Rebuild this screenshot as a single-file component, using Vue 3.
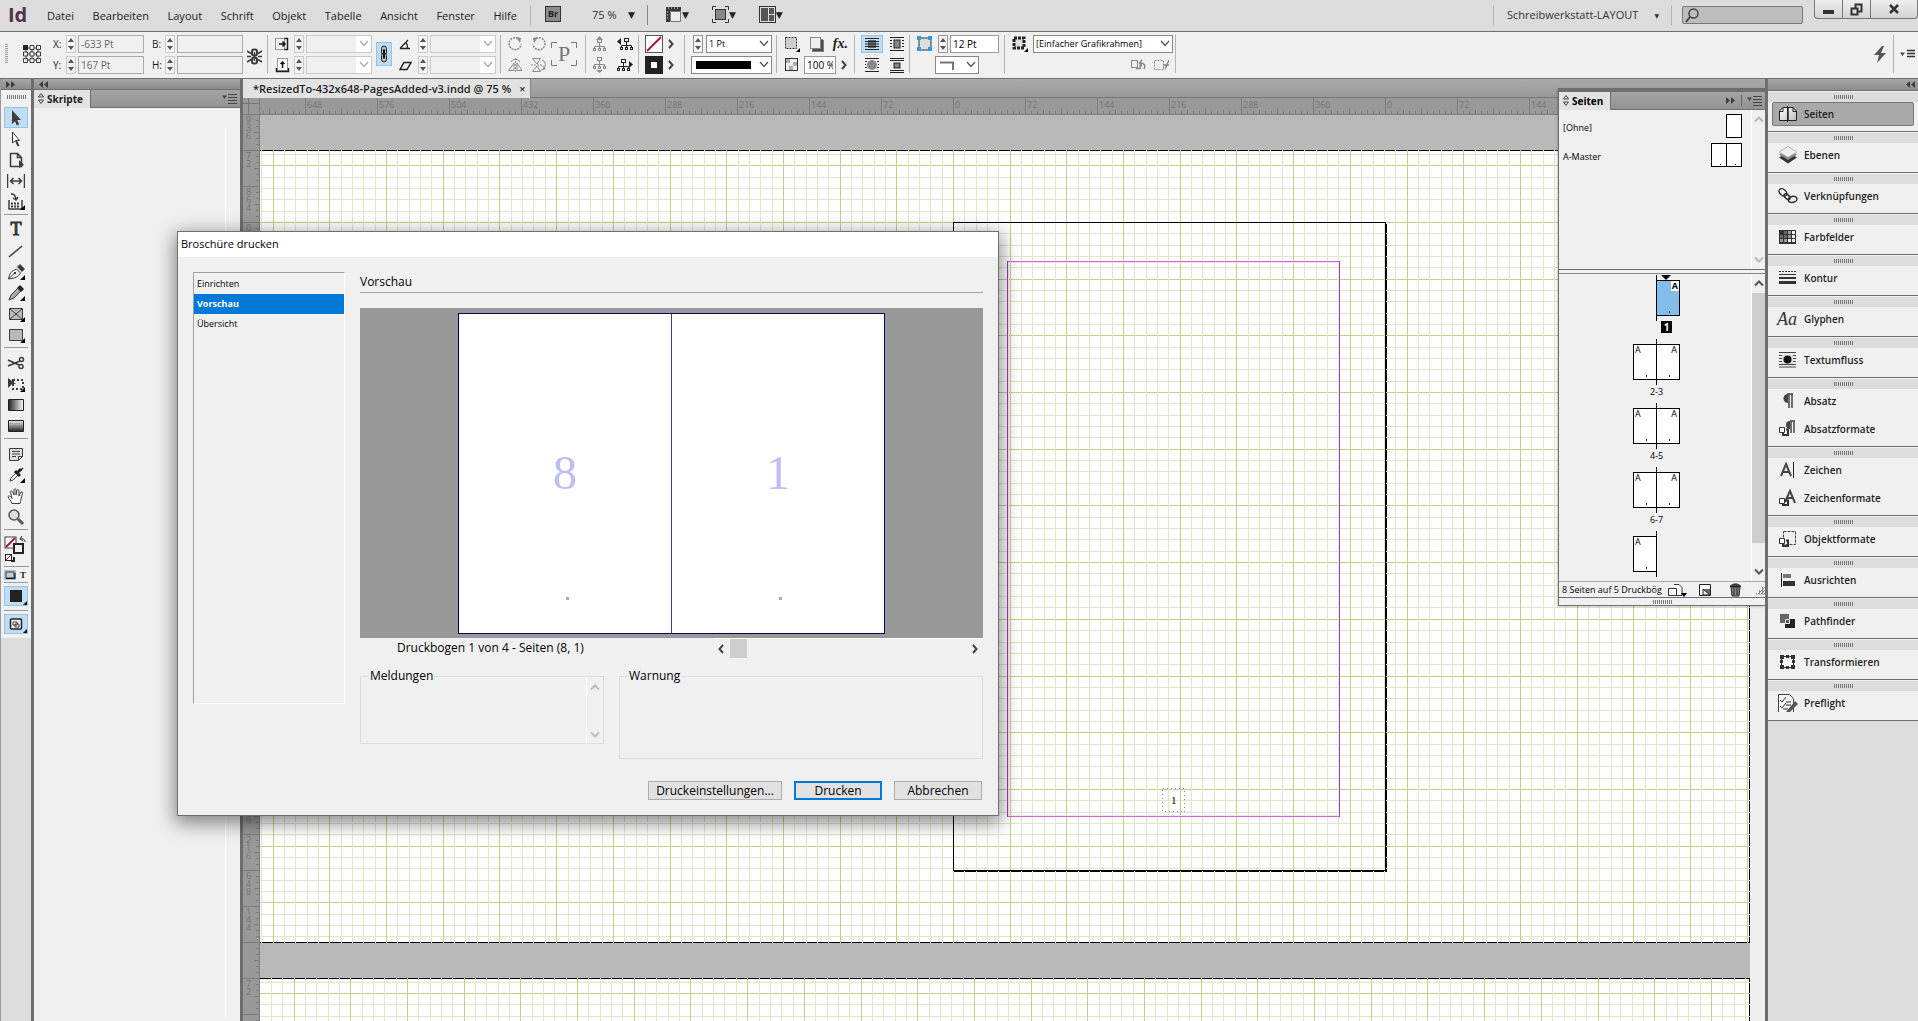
<script setup>
import { h } from 'vue'

const tree = `<g stroke="currentColor" fill="#f0f0f0"><path d="M7.5 6v3M2.5 12V9.5h10V12M7.5 9v3" fill="none"/><rect x="5.5" y="2.5" width="4" height="3"/><rect x="1.5" y="11.5" width="2" height="2"/><rect x="6.5" y="11.5" width="2" height="2"/><rect x="11.5" y="11.5" width="2" height="2"/></g>`
const lines = '<path d="M1 2.5h14M1 13.5h14M1 5.5h14M1 10.5h14M1 8h14" stroke="#222"/>'
const corner = '<path d="M18 17v-5l-5 5z" fill="#000"/>'
const icons = {
  ref: '<path d="M4 4h12v12H4zM4 10h12M10 4v12" fill="none" stroke="#3c3c3c"/><g fill="#f0f0f0" stroke="#3c3c3c"><path d="M8 1.5h4v4H8zM14.5 1.5h4v4h-4zM1.5 8h4v4h-4zM8 8h4v4H8zM14.5 8h4v4h-4zM1.5 14.5h4v4h-4zM8 14.5h4v4H8zM14.5 14.5h4v4h-4z"/></g><path d="M1 1h5v5H1z" fill="#222"/>',
  broken: '<g fill="none" stroke="#3c3c3c"><rect x="5" y="1.5" width="5" height="6" rx="2" stroke-width="2"/><rect x="5" y="9.5" width="5" height="6" rx="2" stroke-width="2"/><path d="M0 3l4 2.500M0 8.500h4M0 14l4-2.500M15 3l-4 2.500M15 8.500h-4M15 14l-4-2.500M7.500 4v9" stroke-width="1.500"/></g>',
  chain: '<g fill="#bbb" stroke="#222"><rect x="3.500" y="1" width="5" height="9" rx="2.500"/><rect x="3.500" y="8" width="5" height="9" rx="2.500"/></g><path d="M6 4.500v9" stroke="#111" stroke-width="2"/>',
  scaleX: '<rect x="1.500" y="2.500" width="9" height="11" fill="none" stroke="#3c3c3c" stroke-dasharray="1 1"/><path d="M10.500 2.500h3v11h-3" fill="none" stroke="#222" stroke-width="1.500"/><path d="M5 8h6M8.500 5.500L11 8l-2.500 2.500" stroke="#111" stroke-width="1.500" fill="none"/>',
  scaleY: '<rect x="3.500" y="1.500" width="10" height="12" fill="#fff" stroke="#3c3c3c" stroke-dasharray="1 1"/><path d="M2.500 11v3.500h12V11" stroke="#222" fill="none" stroke-width="1.500"/><path d="M8.500 11V5M6.500 7l2-2 2 2" stroke="#111" stroke-width="1.500" fill="none"/>',
  angle: '<path d="M2 12.500h10M2 12.500L10 4M8 7c1.500 1 1.500 3 1.500 5" stroke="#222" fill="none" stroke-width="1.300"/>',
  shear: '<path d="M2 12.500h7L13 5.500H6z" stroke="#222" fill="none" stroke-width="1.500"/>',
  cw: '<path d="M11 2.500A6 6 0 1 0 14 8" fill="none" stroke="#8a8a8a" stroke-width="1.500" stroke-dasharray="2 1"/><path d="M9 1l5 1-1 5z" fill="#8a8a8a"/>',
  ccw: '<path d="M5 2.500A6 6 0 1 1 2 8" fill="none" stroke="#8a8a8a" stroke-width="1.500" stroke-dasharray="2 1"/><path d="M7 1L2 2l1 5z" fill="#8a8a8a"/>',
  flipH: '<path d="M1.500 13.500L7 6v7.500zM10 6l5 7.500h-5z" fill="none" stroke="#8a8a8a"/><path d="M8.500 1v14" stroke="#8a8a8a" stroke-dasharray="2 1"/><path d="M4 5a5 5 0 0 1 9 0" stroke="#8a8a8a" fill="none"/>',
  flipV: '<path d="M1.500 1.500h8L6 7zM1.500 14.500h8L6 9z" fill="none" stroke="#8a8a8a"/><path d="M0 8h12" stroke="#8a8a8a" stroke-dasharray="2 1"/><path d="M11 3a5 5 0 0 1 1 9M10 13l4-1-2-3" stroke="#8a8a8a" fill="none"/>',
  pbox: '<path d="M1.500 7V1.500H7M21 1.500h5.500V7M26.500 19v5.500H21M7 24.500H1.500V19" fill="none" stroke="#777"/>',
  treeUp: `<g color="#8a8a8a" transform="translate(0 1)">${tree}</g><path d="M4 4h7L7.500 0z" fill="#8a8a8a"/>`,
  treeDown: `<g color="#8a8a8a" transform="translate(0 -2)">${tree}</g><path d="M4 13h7l-3.500 3z" fill="#8a8a8a"/>`,
  treeLeft: `<g color="#222" transform="translate(3 0)">${tree}</g><path d="M5 2v7L1 5.500z" fill="#222"/>`,
  treeRight: `<g color="#222">${tree}</g><path d="M13 4v7l4-3.500z" fill="#222"/>`,
  none: '<rect x="0.500" y="0.500" width="17" height="17" fill="#fff" stroke="#555"/><path d="M2 16L16 2" stroke="#b3123a" stroke-width="2"/>',
  strokeSw: '<rect width="18" height="18" fill="#222"/><rect x="6" y="6" width="6" height="6" fill="#fff"/>',
  right: '<path d="M2 3l3.500 4L2 11" fill="none" stroke="#444" stroke-width="2"/>',
  left: '<path d="M6 3L2.500 7 6 11" fill="none" stroke="#444" stroke-width="2"/>',
  chev: '<path d="M1 1l4 4.500L9 1" fill="none" stroke="currentColor" stroke-width="1.300"/>',
  chevb: '<path d="M1 1.500l4 4 4-4" fill="none" stroke="currentColor" stroke-width="2"/>',
  selObj: `<rect x="2.500" y="2.500" width="11" height="11" fill="#ccc" stroke="#333" stroke-dasharray="2 1"/>${corner}`,
  shadow: '<path d="M5 4h10v12H5z" fill="#777"/><path d="M4 5h12v12H4z" fill="#333" opacity=".6"/><rect x="2.500" y="2.500" width="10" height="11" fill="#eee" stroke="#888"/>',
  checker: '<rect x="2.500" y="2.500" width="12" height="12" fill="#eee" stroke="#333"/><path d="M3 3h4v4H3zM10 6h4v4h-4zM6 10h4v4H6z" fill="#aaa"/>',
  wrapNone: `${lines}<path d="M4 4h8v8H4z" fill="#222" opacity=".6"/>`,
  wrapBox: '<path d="M1 1.500h14M1 14.500h14M1 4.500h2M13 4.500h2M1 7.500h2M13 7.500h2M1 10.500h2M13 10.500h2" stroke="#222"/><rect x="5" y="4" width="6" height="8" fill="#888" stroke="#222"/>',
  wrapShape: '<path d="M1 1.500h14M1 14.500h14M1 4.500h2M13 4.500h2M1 7.500h1M14 7.500h1M1 10.500h2M13 10.500h2" stroke="#222"/><circle cx="8" cy="8" r="5" fill="#888"/>',
  wrapJump: '<path d="M1 1.500h14M1 3.500h14M1 13.500h14M1 15.500h14" stroke="#222"/><rect x="5" y="6" width="6" height="5" fill="#888" stroke="#222"/>',
  cornerOpt: '<path d="M3 3h12v12H3z" fill="#ddd" stroke="#333"/><g fill="#2a9be0"><path d="M1 1h4v4H1zM12 1h4v4h-4zM1 12h4v4H1zM12 12h4v4h-4z"/></g>',
  cornerSh: '<path d="M0 2.500h13V10" fill="none" stroke="#777" stroke-width="2"/>',
  objStyle: `<rect x="3" y="3" width="10" height="10" fill="#ddd" stroke="#222" stroke-width="3" stroke-dasharray="3 1"/>${corner}`,
  undoSt: '<rect x="1.500" y="3.500" width="6" height="7" fill="none" stroke="#888"/><path d="M6 11.500h4V8M14 12c2-4 0-6-4-6M12 3L9.500 6 12 9" fill="none" stroke="#888" stroke-width="1.500"/>',
  clearSt: '<rect x="1.500" y="3.500" width="9" height="9" fill="none" stroke="#888" stroke-dasharray="2 1"/><path d="M16 3l-4 9M10 8h6" stroke="#888" stroke-width="1.500"/>',
  bolt: '<path d="M9 0L1 9h5l-2 8 9-10H8l3-7z" fill="#555"/>',
  menu: '<path d="M0 1.500h5L2.500 5z" fill="#444"/><path d="M6 .5h9M6 3.500h9M6 6.500h9M6 9.500h9" stroke="#444"/>',
  menu3: '<path d="M0 3.500h5L2.500 7z" fill="#444"/><path d="M7 1.500h8M7 4.500h8M7 7.500h8" stroke="#333" stroke-width="1.500"/>',
  updown: '<path d="M4 .5L6.500 4h-5zM4 10.500L6.500 7h-5z" fill="none" stroke="#444"/>',
  dblR: '<path d="M1 1l4 3.500L1 8zM6 1l4 3.500L6 8z" fill="#3c3c3c"/>',
  dblL: '<path d="M5 1L1 4.500 5 8zM10 1L6 4.500 10 8z" fill="#3c3c3c"/>',
  grid1: '<path d="M1 1h15v4H5v11H1z" fill="#3a3a3a"/><path d="M5.500 5.500h10v10h-10z" fill="#eee" stroke="#777"/><path d="M3 2h1M6 2h1M9 2h1M12 2h1M2 6h1M2 9h1M2 12h1" stroke="#ddd"/>',
  screen: '<path d="M.5 4V.5H4M13 .5h3.500V4M16.500 13v3.500H13M4 16.500H.5V13" stroke="#333" fill="none"/><rect x="3.500" y="3.500" width="10" height="10" fill="#888" stroke="#333"/>',
  arrange: '<rect x=".5" y=".5" width="16" height="16" fill="#ddd" stroke="#333"/><path d="M2 2h7v13H2zM10 2h5v6h-5zM10 9h5v6h-5z" fill="#555"/>',
  magn: '<circle cx="8.500" cy="6.500" r="4.500" fill="none" stroke="#444" stroke-width="1.500"/><path d="M5 10l-4 5" stroke="#444" stroke-width="2"/>',
  min: '<path d="M1 7h11v4H1z" fill="#333"/>',
  restore: '<path d="M5.500 1.500h6v7h-6z" fill="none" stroke="#333" stroke-width="2"/><path d="M1.500 5.500h6v6h-6z" fill="#ddd" stroke="#333" stroke-width="2"/>',
  close: '<path d="M2 2l8 8M10 2l-8 8" stroke="#333" stroke-width="2.500"/>',
  // tool palette
  arrow: '<path d="M5 1l9 10H9.500L5 15z" fill="#3c3c3c"/><path d="M8.500 10l2.500 6" stroke="#3c3c3c" stroke-width="2.500"/>',
  direct: '<path d="M5.500 2v11l3-2.500h4z" fill="#fff" stroke="#3c3c3c"/><path d="M9 11l2.500 5" stroke="#3c3c3c" stroke-width="2"/>',
  page: '<path d="M3.500 2.500h7l4 4v9h-11zM10.500 2.500v4h4" fill="#eee" stroke="#3c3c3c" stroke-width="1.500"/><path d="M12 9v8l5-3z" fill="#3c3c3c"/>',
  gap: '<path d="M0 2v14M18 2v14" stroke="#3c3c3c" stroke-width="2.500"/><path d="M3 9h12M6.500 6L3.500 9l3 3M11.500 6l3 3-3 3" fill="none" stroke="#3c3c3c" stroke-width="1.500"/>',
  content: `<path d="M2 7v9h13V7" fill="none" stroke="#3c3c3c" stroke-width="1.500"/><path d="M4 10.500h9M4 13.500h9" stroke="#3c3c3c" stroke-width="2" stroke-dasharray="2 1"/><path d="M4 1c4 0 4 2 5 5M6 5l3 2 2-3" fill="none" stroke="#3c3c3c" stroke-width="1.500"/>${corner}`,
  line: '<path d="M2 15L15 4" stroke="#3c3c3c" stroke-width="1.500"/>',
  pen: `<path d="M1.500 16c1-6 3-8 8-10l4 4c-2 4-5 5-12 6zl6-6" fill="#eee" stroke="#3c3c3c"/><path d="M10 4l3-3 5 5-3 3z" fill="#3c3c3c"/><circle cx="8" cy="10" r="1"/>${corner}`,
  pencil: `<path d="M2 16l2-5 7-7 3 3-7 7z" fill="#aaa" stroke="#3c3c3c"/><path d="M11 4l2-2 3 3-2 2z" fill="#222" stroke="#222" stroke-width="1.500"/>${corner}`,
  frame: `<path d="M2.500 3.500h13v11h-13zM2.500 3.500l13 11M15.500 3.500l-13 11" fill="#bbb" stroke="#3c3c3c"/>${corner}`,
  rect: `<path d="M2.500 3.500h13v11h-13z" fill="#b8b8b8" stroke="#3c3c3c"/>${corner}`,
  scissors: '<path d="M1 6l11 5M1 12l12-5" stroke="#3c3c3c" stroke-width="1.800"/><g fill="none" stroke="#3c3c3c" stroke-width="1.500"><circle cx="14.500" cy="5.500" r="2"/><circle cx="14" cy="12.500" r="2"/></g>',
  transform: `<rect x="6" y="5" width="10" height="9" fill="none" stroke="#3c3c3c" stroke-width="2" stroke-dasharray="2 2"/><path d="M1 3l8 6H5l-4 4z" fill="#3c3c3c"/>${corner}`,
  gradient: '<defs><linearGradient id="gr"><stop stop-color="#222"/><stop offset="1" stop-color="#fff"/></linearGradient></defs><path d="M1.500 3.500h15v11h-15z" fill="url(#gr)" stroke="#222"/>',
  feather: '<defs><linearGradient id="gf" x2="0" y2="1"><stop stop-color="#eee"/><stop offset="1" stop-color="#222"/></linearGradient></defs><path d="M1.500 3.500h15v11h-15z" fill="url(#gf)" stroke="#222"/><path d="M2 6h4v2H2zM9 6h4v2H9z" fill="#aaa"/>',
  note: '<path d="M2.500 3.500h13v8l-4 4h-9zM11.500 15.500v-4h4M5 6.500h8M5 9h8M5 11.500h4" fill="#ddd" stroke="#3c3c3c"/>',
  dropper: `<path d="M3 15l1-3 5-5 2 2-5 5z" fill="#fff" stroke="#3c3c3c"/><path d="M8 5l5 5M10 7l4-4" stroke="#222" stroke-width="3"/><path d="M14 3l1 1" stroke="#222" stroke-width="4"/>${corner}`,
  hand: '<path d="M5 16.500c-1-3-3-4-4-7 1-1 2-1 4 2L3.500 4.500c1-1 2 0 2.500 1L7 8V2.500C8 1.500 9 2 9 3v5l1-5c1-1 2 0 2 1v5l2-4c1-.5 2 0 1.500 1.500L14 12c0 2-1 3-1 4.500z" fill="#fff" stroke="#3c3c3c"/>',
  zoom: '<circle cx="7" cy="7" r="5" fill="#ddd" stroke="#555" stroke-width="1.500"/><path d="M11 11l5 5" stroke="#555" stroke-width="3"/>',
  fillStroke: '<rect x="1" y="1" width="11" height="11" fill="#fff" stroke="#3c3c3c"/><path d="M2 11L11 2" stroke="#b3123a" stroke-width="2"/><rect x="10" y="8" width="9" height="9" fill="#f0f0f0" stroke="#222" stroke-width="2"/><path d="M16 3c4-1 5 1 5 3M18 0l-2 3 3 2" fill="none" stroke="#222"/><rect x="1.500" y="18.500" width="6" height="6" fill="#fff" stroke="#222"/><path d="M2 24l5-5" stroke="#b3123a"/><path d="M7 25h3v-4" fill="none" stroke="#222" stroke-width="2"/>',
  contSm: '<rect x="2" y="2" width="8" height="6" fill="#ccc" stroke="#333"/><path d="M2 8.500h9V3" stroke="#111" fill="none"/>',
  black: '<rect x="3" y="3" width="12" height="12" fill="#222"/><path d="M20 18v-4l-4 4z"/>',
  mode: '<rect x="3.500" y="4" width="11" height="10" rx="1" fill="#eee" stroke="#222" stroke-width="1.500"/><path d="M6 7h4v3H6zM8 9h4v3H8z" fill="none" stroke="#444"/><path d="M20 18v-4l-4 4z"/>',
  // panel dock
  seiten: '<defs><linearGradient id="gs" x2="1" y2="1"><stop stop-color="#fff"/><stop offset="1" stop-color="#bbb"/></linearGradient></defs><path d="M2.500 6L6 2.500h5v13H2.500zM11 2.500h5L19.500 6v9.500H11z" fill="url(#gs)" stroke="#222"/><path d="M10.500 1v16" stroke="#222"/><path d="M2.500 6.500H6v-4M19.500 6.500H16v-4" stroke="#222" fill="none"/>',
  ebenen: '<path d="M2 11.500L11 6l9 5.500-9 6z" fill="#333"/><path d="M2 8.500L11 3l9 5.500L11 14z" fill="#888"/><path d="M2 6l9-5.500L20 6l-9 5.500z" fill="#eee" stroke="#999" stroke-width=".7"/>',
  verkn: '<g fill="none" stroke="#333" stroke-width="1.500"><ellipse cx="6" cy="5.500" rx="4.500" ry="3" transform="rotate(40 6 5.500)"/><ellipse cx="10.500" cy="9.500" rx="3.500" ry="2" transform="rotate(40 10 9)"/><ellipse cx="15.500" cy="12.500" rx="4.500" ry="3" transform="rotate(-10 15 12)"/></g>',
  farb: '<path d="M2 2h17v14H2z" fill="#333"/><g fill="#eee"><path d="M15 3h3v3h-3zM15 7h3v3h-3zM15 11h3v3h-3zM11 11h3v3h-3z"/></g><g fill="#999"><path d="M11 3h3v3h-3zM11 7h3v3h-3zM7 11h3v3H7zM3 11h3v3H3z"/></g><path d="M7 3h3v3H7zM7 7h3v3H7zM3 7h3v3H3z" fill="#666"/>',
  kontur: '<path d="M2 2.500h17" stroke="#333" stroke-dasharray="2 1"/><path d="M2 5.500h17" stroke="#333"/><path d="M2 9h17" stroke="#333" stroke-width="2"/><path d="M2 13.500h17" stroke="#333" stroke-width="3"/>',
  textum: '<path d="M2 1.500h17M2 4.500h17M2 7.500h3M16 7.500h3M2 10.500h3M16 10.500h3M2 13.500h17M2 16h17" stroke="#444"/><path d="M5 4h11v9H5z" fill="#ddd"/><circle cx="10.500" cy="8.500" r="4" fill="#111"/>',
  absatz: '<path d="M11 2a4.500 4.500 0 0 0 0 9z" fill="#444"/><path d="M10 2h6M12 2v14M15 2v14" stroke="#444" stroke-width="1.500"/>',
  absatzf: '<path d="M13 1a4 4 0 0 0 0 8z" fill="#444"/><path d="M13 1h5M14 1v12M17 1v12" stroke="#444" stroke-width="1.500"/><path d="M9 9.500h2V15H6v-2" fill="none" stroke="#333" stroke-width="2"/><path d="M2.500 7.500h5v5h-5z" fill="#fff" stroke="#333"/>',
  zeichen: '<path d="M4 15l5-12 5 12M6 11h6" fill="none" stroke="#444" stroke-width="2"/><path d="M16.500 1v16" stroke="#222"/>',
  zeichenf: '<path d="M8 13l5-11 5 12M10 9h6" fill="none" stroke="#444" stroke-width="2"/><path d="M9 11.500h2V16H6v-1" fill="none" stroke="#333" stroke-width="2"/><path d="M2.500 9.500h5v5h-5z" fill="#fff" stroke="#333"/>',
  objf: '<path d="M6.500 1.500h12v13h-12z" fill="#eee" stroke="#444" stroke-dasharray="3 1"/><path d="M9 10.500h2V16H6v-2" fill="none" stroke="#333" stroke-width="2"/><path d="M2.500 8.500h5v5h-5z" fill="#fff" stroke="#333"/>',
  ausr: '<path d="M4.500 2v14" stroke="#222"/><path d="M6 3h8v4H6z" fill="#777"/><path d="M6 10h12v5H6z" fill="#333"/>',
  pathf: '<path d="M3 2h9v9H3z" fill="#666"/><path d="M8 7h10v9H8z" fill="#222"/><path d="M8.500 7.500h4v4h-4z" fill="#555" stroke="#eee"/>',
  transf: '<rect x="4.500" y="3.500" width="12" height="11" fill="#f8f8f8" stroke="#333"/><path d="M3 2h4v4H3zM14 2h4v4h-4zM3 12h4v4H3zM14 12h4v4h-4zM9 2h3v3H9zM9 13h3v3H9zM3 7h3v3H3zM15 7h3v3h-3z" fill="#333"/>',
  prefl: '<path d="M1.500.5h11l4 4v14h-15z" fill="#f4f4f4" stroke="#444"/><path d="M3 6l2 2 4-5M3 12l2 2 4-5M9 8h5M9 11h5M6 15h5" fill="none" stroke="#333"/><path d="M9 18l9-11 3 3-9 9z" fill="#555"/>',
  newSize: '<path d="M1.500 6.500h8v7h-8zM7 2.500h5l3 3v8H9" fill="#fff" stroke="#333"/><path d="M14 11h6l-3 4z"/>',
  newPage: '<path d="M1.500 1.500h11v11h-11z" fill="#fff" stroke="#222"/><path d="M5 12V6h7v6z" fill="#666"/><path d="M5 6l7 6H5z" fill="#eee" stroke="#222"/>',
  trash: '<path d="M2 5h9l-1 9H3z" fill="#888" stroke="#222"/><path d="M1 4.500C4 1 9 1 12 4.500zM5 6v7M8 6v7" stroke="#222" fill="#444"/>'
}
const Ico = p => h('svg', { viewBox: `0 0 ${p.w} ${p.h}`, width: p.w, height: p.h, innerHTML: icons[p.n], 'aria-hidden': 'true' })
Ico.props = { n: String, w: Number, h: Number }

const menus = ['Datei', 'Bearbeiten', 'Layout', 'Schrift', 'Objekt', 'Tabelle', 'Ansicht', 'Fenster', 'Hilfe']
const tools = [
  ['arrow', 'direct', 'page', 'gap', 'content'],
  ['type', 'line', 'pen', 'pencil', 'frame', 'rect'],
  ['scissors', 'transform', 'gradient', 'feather'],
  ['note', 'dropper', 'hand', 'zoom']
]
const dock = [
  [['seiten', 'Seiten']], [['ebenen', 'Ebenen']], [['verkn', 'Verknüpfungen']], [['farb', 'Farbfelder']],
  [['kontur', 'Kontur']], [['glyph', 'Glyphen']], [['textum', 'Textumfluss']],
  [['absatz', 'Absatz'], ['absatzf', 'Absatzformate']],
  [['zeichen', 'Zeichen'], ['zeichenf', 'Zeichenformate']],
  [['objf', 'Objektformate']], [['ausr', 'Ausrichten']], [['pathf', 'Pathfinder']],
  [['transf', 'Transformieren']], [['prefl', 'Preflight']]
]
const spreads = [
  { label: '1', pages: ['', 'A'], current: true },
  { label: '2-3', pages: ['A', 'A'] },
  { label: '4-5', pages: ['A', 'A'] },
  { label: '6-7', pages: ['A', 'A'] },
  { label: '', pages: ['A', ''] }
]

// Document grid: a heavy line every 20 mm at 75 %, five subdivisions each
const STEP = 56.69
function gridLines(origin, from, to) {
  const out = []
  const first = Math.ceil((from - origin) / (STEP / 5))
  for (let k = first; ; k++) {
    const at = Math.round(origin + k * STEP / 5)
    if (at >= to) break
    if (at >= from) out.push({ at, major: k % 5 === 0 })
  }
  return out.sort((a, b) => a.major - b.major)
}
const boards = [
  { top: 35, bottom: 827, cols: gridLines(693, 0, 1490), rows: gridLines(107, 36, 827) },
  { top: 863, bottom: 1400, cols: gridLines(884, 0, 1490), rows: gridLines(878, 864, 1400) }
]
const hLabels = ['648', '576', '504', '432', '360', '288', '216', '144', '72', '0', '72', '144', '216', '288', '360', '0', '72', '144', '216', '288', '360']
const hTicks = Array.from({ length: 264 }, (_, i) => ({ x: 45 - 72 + i * 6, l: i % 12 === 0 ? 16 : i % 6 === 0 ? 6 : i % 3 === 0 ? 4 : 3 }))
const vLabels = { '-1': '936', 0: '72', 1: '864', 2: '0', 18: '576', 19: '216', 20: '648', 21: '144', 23: '72' }
const vTicks = Array.from({ length: 200 }, (_, i) => ({ y: -1 + i * 6, l: i % 6 === 0 ? 16 : i % 3 === 0 ? 5 : 3 }))
</script>

<template>
  <div class="app">
    <header class="menubar">
      <div class="logo">Id</div>
      <nav><button v-for="m in menus" :key="m">{{ m }}</button></nav>
      <i class="sep"></i>
      <button class="bridge">Br</button>
      <button class="zoomlvl">75 %<span>▼</span></button>
      <i class="sep dark"></i>
      <button class="view" v-for="n in ['grid1', 'screen', 'arrange']" :key="n" :aria-label="n"><Ico :n="n" :w="17" :h="17" /><span>▼</span></button>
      <div class="grow"></div>
      <i class="sep"></i>
      <button class="workspace">Schreibwerkstatt-LAYOUT<span>▼</span></button>
      <i class="sep"></i>
      <label class="search"><Ico n="magn" :w="16" :h="16" /><input aria-label="Suchen"></label>
      <div class="winbtns">
        <button aria-label="Minimieren"><Ico n="min" :w="13" :h="13" /></button>
        <button aria-label="Wiederherstellen"><Ico n="restore" :w="13" :h="13" /></button>
        <button class="wide" aria-label="Schließen"><Ico n="close" :w="12" :h="12" /></button>
      </div>
    </header>

    <section class="control">
      <span class="vgrip"></span>
      <Ico class="refpt" n="ref" :w="20" :h="20" />
      <div class="fields pos">
        <label for="fx">X:</label><span class="spin"></span><input id="fx" value="-633 Pt" class="off">
        <label for="fy">Y:</label><span class="spin"></span><input id="fy" value="167 Pt" class="off">
      </div>
      <div class="fields pos">
        <label for="fb">B:</label><span class="spin"></span><input id="fb" class="off">
        <label for="fh">H:</label><span class="spin"></span><input id="fh" class="off">
      </div>
      <Ico class="brk" n="broken" :w="15" :h="17" />
      <i class="sep"></i>
      <div class="fields scale">
        <template v-for="n in ['scaleX', 'scaleY']" :key="n">
          <Ico :n="n" :w="16" :h="16" /><span class="spin"></span>
          <span class="combo off"><select :aria-label="n" disabled><option></option></select><b><Ico n="chev" :w="10" :h="7" /></b></span>
        </template>
      </div>
      <button class="link on" aria-label="Proportionen"><Ico n="chain" :w="12" :h="18" /></button>
      <div class="fields scale">
        <template v-for="n in ['angle', 'shear']" :key="n">
          <Ico :n="n" :w="16" :h="16" /><span class="spin"></span>
          <span class="combo off"><select :aria-label="n" disabled><option></option></select><b><Ico n="chev" :w="10" :h="7" /></b></span>
        </template>
      </div>
      <i class="sep"></i>
      <div class="fields pair"><Ico v-for="n in ['cw', 'ccw', 'flipH', 'flipV']" :key="n" :n="n" :w="16" :h="16" /></div>
      <div class="pbox"><Ico n="pbox" :w="28" :h="26" /><span>P</span></div>
      <i class="sep"></i>
      <div class="fields pair trees"><Ico v-for="n in ['treeUp', 'treeLeft', 'treeDown', 'treeRight']" :key="n" :n="n" :w="18" :h="16" /></div>
      <i class="sep"></i>
      <div class="fields sw">
        <Ico n="none" :w="18" :h="18" /><Ico n="right" :w="8" :h="14" />
        <Ico n="strokeSw" :w="18" :h="18" /><Ico n="right" :w="8" :h="14" />
      </div>
      <i class="sep"></i>
      <div class="rows stroke">
        <div><span class="spin dk"></span><span class="combo"><select aria-label="Konturstärke"><option>1 Pt</option></select><b><Ico n="chev" :w="10" :h="7" /></b></span></div>
        <div><span class="combo"><select aria-label="Konturtyp"><option></option></select><em></em><b><Ico n="chev" :w="10" :h="7" /></b></span></div>
      </div>
      <i class="sep"></i>
      <div class="rows fx">
        <div><Ico n="selObj" :w="17" :h="17" /><Ico n="shadow" :w="17" :h="17" /><span class="fxt">fx.</span></div>
        <div><Ico n="checker" :w="17" :h="17" /><input class="pct" value="100 %" aria-label="Deckkraft"><Ico n="right" :w="8" :h="14" /></div>
      </div>
      <i class="sep"></i>
      <div class="fields wrap">
        <span class="on"><Ico n="wrapNone" :w="16" :h="16" /></span><Ico n="wrapBox" :w="16" :h="16" />
        <span><Ico n="wrapShape" :w="16" :h="16" /></span><Ico n="wrapJump" :w="16" :h="16" />
      </div>
      <i class="sep"></i>
      <div class="rows crn">
        <div><Ico n="cornerOpt" :w="17" :h="17" /><span class="spin dk"></span><input value="12 Pt" aria-label="Eckengröße"></div>
        <div class="second"><span class="combo"><select aria-label="Eckenform"><option></option></select><u><Ico n="cornerSh" :w="15" :h="10" /></u><b><Ico n="chev" :w="10" :h="7" /></b></span></div>
      </div>
      <i class="sep"></i>
      <div class="rows sty">
        <div><Ico n="objStyle" :w="17" :h="17" /><span class="combo"><select aria-label="Objektformat"><option>[Einfacher Grafikrahmen]</option></select><b><Ico n="chev" :w="10" :h="7" /></b></span></div>
        <div class="end"><Ico n="undoSt" :w="16" :h="16" /><Ico n="clearSt" :w="16" :h="16" /></div>
      </div>
      <i class="sep"></i>
      <div class="grow"></div>
      <Ico n="bolt" :w="14" :h="17" />
      <i class="sep last"></i>
      <Ico n="menu3" :w="15" :h="10" />
    </section>

    <main>
      <aside class="tools">
        <div class="strip"><Ico n="dblR" :w="11" :h="9" /></div>
        <div class="toolbox">
          <span class="grip"></span>
          <div class="tgroup" v-for="(g, gi) in tools" :key="gi">
            <button v-for="t in g" :key="t" :class="{ on: t === 'arrow' }" :aria-label="t">
              <span v-if="t === 'type'" class="tt">T</span><Ico v-else :n="t" :w="18" :h="18" />
            </button>
          </div>
          <div class="swatches"><Ico n="fillStroke" :w="23" :h="26" /></div>
          <div class="fmt"><span class="on"><Ico n="contSm" :w="12" :h="10" /></span><b>T</b></div>
          <div class="big"><button class="on" aria-label="Farbe anwenden"><Ico n="black" :w="20" :h="18" /></button></div>
          <div class="big"><button class="on" aria-label="Bildschirmmodus"><Ico n="mode" :w="20" :h="18" /></button></div>
        </div>
      </aside>

      <aside class="scripts">
        <div class="strip"><Ico n="dblL" :w="11" :h="9" /></div>
        <div class="ptabs"><span class="ptab"><Ico n="updown" :w="8" :h="11" />Skripte</span><Ico n="menu" :w="15" :h="10" /></div>
        <div class="sbody"><i></i></div>
      </aside>

      <section class="doc">
        <div class="dtabs"><div class="dtab">*ResizedTo-432x648-PagesAdded-v3.indd @ 75 %<button aria-label="Schließen">×</button></div></div>
        <div class="hrow">
          <div class="cnr"></div>
          <svg class="hruler" shape-rendering="crispEdges">
            <rect v-for="t in hTicks" :key="t.x" :x="t.x" :y="16 - t.l" width="1" :height="t.l" fill="#7c7c7c" />
            <text v-for="(l, i) in hLabels" :key="i" :x="i * 72 + 47" y="10">{{ l }}</text>
          </svg>
        </div>
        <div class="drow">
          <svg class="vruler" shape-rendering="crispEdges">
            <rect v-for="t in vTicks" :key="t.y" :x="16 - t.l" :y="t.y" :width="t.l" height="1" fill="#7c7c7c" />
            <template v-for="(l, k) in vLabels" :key="k">
              <text v-for="(c, j) in l" :key="j" x="3" :y="35 + k * 36 + 9 + j * 8">{{ c }}</text>
            </template>
          </svg>
          <svg class="canvas" shape-rendering="crispEdges">
            <g v-for="b in boards" :key="b.top">
              <rect x="0" :y="b.top" width="1490" :height="b.bottom - b.top + 1" fill="#000" />
              <rect x="0" :y="b.top + 1" width="1489" :height="b.bottom - b.top - 1" fill="#fff" />
              <template v-if="b.top === 35">
                <rect x="694" y="756" width="433" height="1" /><rect x="1126" y="109" width="1" height="648" />
              </template>
              <rect v-for="r in b.rows" :key="'r' + r.at" x="0" :y="r.at" width="1490" height="1" :fill="r.major ? '#cdca8e' : '#e3e5ca'" />
              <rect v-for="c in b.cols" :key="'c' + c.at" :x="c.at" :y="b.top" width="1" :height="b.bottom - b.top + 1" :fill="c.major ? '#cdca8e' : '#e3e5ca'" />
            </g>
            <rect x="693.500" y="107.500" width="432" height="648" fill="none" stroke="#000" />
            <path d="M748.500 147v553M1078.500 147v553M747 147.500h332M747 700.500h332" stroke="#fbe0fb" />
            <path d="M747 146.500h333M747 701.500h333" stroke="#d264d0" />
            <path d="M747.500 146v556M1079.500 146v556" stroke="#8f44a8" />
            <rect x="902.500" y="673.500" width="22" height="23" fill="none" stroke="#5b8fd0" stroke-dasharray="1 3" />
            <text class="folio" x="911" y="689">1</text>
          </svg>
          <div class="vscroll"></div>
        </div>

        <section class="pages">
          <div class="ptabs"><span class="ptab"><Ico n="updown" :w="8" :h="11" />Seiten</span><span class="hact"><Ico n="dblR" :w="11" :h="9" /><i></i><Ico n="menu" :w="15" :h="10" /></span></div>
          <div class="masters">
            <div class="mlist">
              <div><span>[Ohne]</span><i class="mp"></i></div>
              <div><span>A-Master</span><i class="mp dot"></i><i class="mp dot join"></i></div>
            </div>
            <div class="sc dim"><Ico class="up" n="chevb" :w="10" :h="7" /><Ico n="chevb" :w="10" :h="7" /></div>
          </div>
          <div class="plist">
            <div class="spreads">
              <div class="spread" v-for="s in spreads" :key="s.label" :class="{ current: s.current }">
                <div class="sp">
                  <div v-for="(p, i) in s.pages" :key="i" class="pg" :class="{ has: p, r: i }"><span v-if="p">{{ p }}</span></div>
                </div>
                <span class="slabel">{{ s.label }}</span>
              </div>
            </div>
            <div class="sc thumb"><Ico class="up" n="chevb" :w="10" :h="7" /><i></i><Ico n="chevb" :w="10" :h="7" /></div>
          </div>
          <footer><span>8 Seiten auf 5 Druckbög</span><Ico n="newSize" :w="20" :h="16" /><Ico n="newPage" :w="14" :h="14" /><Ico n="trash" :w="13" :h="15" /><i></i></footer>
          <div class="pgrip"><span class="grip"></span></div>
        </section>
      </section>

      <aside class="dock">
        <div class="strip r"><Ico n="dblL" :w="11" :h="9" /></div>
        <div class="dgroup" v-for="(g, i) in dock" :key="i">
          <div class="dgrip"><span class="grip"></span></div>
          <button v-for="d in g" :key="d[1]" :class="{ sel: d[0] === 'seiten' }">
            <span v-if="d[0] === 'glyph'" class="aa">Aa</span><Ico v-else :n="d[0]" :w="22" :h="18" />{{ d[1] }}
          </button>
        </div>
      </aside>
    </main>

    <div class="dialog" role="dialog" aria-labelledby="dt">
      <h1 id="dt">Broschüre drucken</h1>
      <div class="dbody">
        <ul><li>Einrichten</li><li class="cur">Vorschau</li><li>Übersicht</li></ul>
        <div class="pane">
          <h2>Vorschau</h2>
          <div class="preview"><div class="sheet"><div>8<i></i></div><div>1<i></i></div></div></div>
          <div class="nav"><span>Druckbogen 1 von 4 - Seiten (8, 1)</span>
            <div class="hs"><button aria-label="Zurück"><Ico n="left" :w="8" :h="14" /></button><i></i><button aria-label="Weiter"><Ico n="right" :w="8" :h="14" /></button></div>
          </div>
          <div class="boxes">
            <fieldset class="msg"><legend>Meldungen</legend><div class="sc dim"><Ico class="up" n="chevb" :w="10" :h="7" /><Ico n="chevb" :w="10" :h="7" /></div></fieldset>
            <fieldset class="warn"><legend>Warnung</legend></fieldset>
          </div>
          <div class="btns"><button class="w">Druckeinstellungen...</button><button class="prim">Drucken</button><button>Abbrechen</button></div>
        </div>
      </div>
    </div>
  </div>
</template>

<style>
body { margin: 0; overflow: hidden; }
</style>

<style scoped>
* { box-sizing: border-box; }
.app { font: 11px/16px "Open Sans", "Noto Sans", sans-serif; color: #1e1e1e; height: 100vh; min-width: 1300px; display: flex; flex-direction: column; background: #dcdcdc; position: relative; overflow: hidden; }
button { font: inherit; color: inherit; background: none; border: 0; padding: 0; }
span { white-space: nowrap; }
svg { flex: none; display: block; }
.grow { flex: 1; }
.sep { width: 1px; background: #b4b4b4; flex: none; }
.on { background: #bfdcf3; box-shadow: inset 0 0 0 1px #93c4ea; }

.menubar { height: 32px; flex: none; display: flex; align-items: center; border-bottom: 1px solid #6e6e6e; background: #dcdcdc; color: #222; }
.logo { width: 47px; padding: 0 0 2px 8px; font: bold 20px/26px "Open Sans", sans-serif; color: #4f3349; }
nav { display: flex; justify-content: space-between; width: 470px; margin-right: 13px; }
.menubar .sep { height: 20px; margin-top: -2px; }
.menubar .sep.dark { background: #888; }
.bridge { width: 16px; height: 16px; margin: 0 31px 4px 14px; background: #8c8c8c; border: 1px solid #333; font-size: 9px; font-weight: bold; line-height: 12px; color: #222; }
.zoomlvl { width: 55px; display: flex; justify-content: space-between; padding-right: 12px; color: #333; margin-bottom: 2px; }
.view { display: flex; align-items: center; margin: 0 5px 2px 17px; }
.view + .view { margin-left: 18px; }
.view span, .zoomlvl span { font-size: 9px; font-family: "DejaVu Sans", sans-serif; color: #222; }
.workspace { padding: 0 12px 0 13px; width: 177px; display: flex; align-items: center; justify-content: space-between; color: #333; margin-bottom: 1px; }
.workspace span { font: 6px "DejaVu Sans", sans-serif; }
.search { width: 121px; height: 18px; margin: 0 11px 2px 10px; border: 1px solid #777; background: #bdbdbd; border-radius: 2px; display: flex; align-items: center; padding-left: 2px; }
.search input { width: 80px; border: 0; background: none; height: 14px; padding: 0; }
.winbtns { display: flex; align-self: flex-start; height: 19px; width: 104px; border: 1px solid #777; border-top: 0; border-radius: 0 0 4px 4px; background: linear-gradient(#eee, #d4d4d4); }
.winbtns button { width: 28px; display: grid; place-items: center; border-right: 1px solid #777; }
.winbtns .wide { flex: 1; border: 0; }

.control { height: 47px; flex: none; background: #f0f0f0; border-bottom: 1px solid #6e6e6e; display: flex; align-items: center; font-size: 10px; padding: 0 3px 2px 0; }
.control > .sep { height: 38px; margin-right: 6px; }
.vgrip { width: 3px; height: 20px; margin-left: 5px; background: repeating-linear-gradient(#999 0 1px, transparent 1px 2px); }
.refpt { margin: 0 11px 0 14px; }
.fields { display: grid; grid-auto-rows: 18px; row-gap: 3px; align-items: center; flex: none; }
.pos { grid-template-columns: 13px 12px 66px; margin-right: 8px; }
.scale { grid-template-columns: 20px 12px 66px; }
.pair { grid-template-columns: 24px 24px; }
.trees { grid-template-columns: 24px 22px; }
.sw { grid-template-columns: 22px 17px; }
.wrap { grid-template-columns: 28px 20px; }
.wrap span { width: 22px; height: 18px; display: grid; place-items: center; }
.brk { margin: 4px 5px 0 -4px; }
.control input { height: 18px; width: 100%; border: 1px solid #999; background: #fff; padding: 0 2px; font: 10px "Open Sans", sans-serif; color: #000; min-width: 0; }
.control input.off { background: #f0f0f0; color: #666; border-color: #aaa; }
.spin { display: flex; flex: none; width: 10px; height: 18px; border: 1px solid #ccc; flex-direction: column; justify-content: space-around; align-items: center; background: #f4f4f4; }
.spin::before { content: ""; border: 3px solid transparent; border-top: 0; border-bottom: 4px solid #555; }
.spin::after { content: ""; border: 3px solid transparent; border-bottom: 0; border-top: 4px solid #555; }
.spin.dk { border-color: #999; }
.combo { position: relative; display: block; height: 18px; flex: 1; }
.combo select { appearance: none; width: 100%; height: 18px; border: 1px solid #888; border-radius: 0; background: #fff; font: 9px "Open Sans", sans-serif; padding: 0 16px 0 2px; color: #000; }
.combo.off select { background: #f0f0f0; border-color: #bbb; }
.combo b { position: absolute; right: 1px; top: 1px; width: 15px; height: 16px; display: grid; place-items: center; background: #fff; color: #555; pointer-events: none; }
.combo.off b { color: #aaa; }
.combo em { position: absolute; left: 5px; top: 5px; right: 21px; height: 8px; background: #000; pointer-events: none; }
.combo u { position: absolute; left: 5px; top: 4px; pointer-events: none; }
.link { width: 16px; height: 24px; margin: 0 6px 0 4px; display: grid; place-items: center; }
.scale + .sep { margin-left: 4px; }
.pbox { width: 28px; height: 26px; display: grid; place-items: center; margin: 0 7px 0 -5px; }
.pbox > * { grid-area: 1 / 1; }
.pbox span { font: 22px/26px "Liberation Serif", serif; color: #777; }
.rows { display: grid; row-gap: 3px; flex: none; margin-right: 5px; }
.rows > div { display: flex; align-items: center; height: 18px; }
.stroke { width: 81px; margin-right: 4px; }
.stroke .spin { margin: 0 3px 0 2px; }
.fx { width: 65px; margin-right: 6px; }
.fx > div { justify-content: space-between; }
.fxt { font: italic bold 14px "Liberation Serif", serif; }
.fx .pct { width: 32px; }
.crn { width: 83px; }
.crn .spin { margin: 0 2px 0 5px; }
.crn .second { padding: 0 20px 0 19px; }
.sty { width: 162px; margin-right: 2px; }
.sty .combo { margin-left: 5px; }
.sty .end { justify-content: flex-end; gap: 7px; padding-right: 4px; }
.control .last { margin: 0 6px; }

main { flex: 1; display: flex; min-height: 0; }
.strip { height: 11px; flex: none; background: linear-gradient(#a6a6a6, #8c8c8c); border-bottom: 1px solid #6e6e6e; padding: 1px 4px 0; display: flex; }
.strip.r { justify-content: flex-end; padding-right: 2px; height: 12px; }
.grip { display: block; flex: none; width: 19px; height: 4px; background: repeating-linear-gradient(90deg, #777 0 1px, transparent 1px 2px); }
.tools { width: 31px; flex: none; border-left: 1px solid #999; background: #dcdcdc; }
.toolbox { background: #f0f0f0; display: flex; flex-direction: column; align-items: center; padding: 5px 0; height: 548px; }
.toolbox > * { flex: none; }
.toolbox > .grip { margin-bottom: 8px; }
.tgroup { padding: 0 0 2px; margin-bottom: 4px; border-bottom: 1px solid #999; width: 24px; }
.tgroup button { width: 24px; height: 21px; display: grid; place-items: center; }
.tt { font: 18px/21px "Liberation Serif", serif; color: #333; -webkit-text-stroke: 1px #333; }
.swatches { height: 33px; width: 25px; border-bottom: 1px solid #999; padding-top: 2px; }
.fmt { display: flex; width: 24px; justify-content: space-between; height: 16px; border-bottom: 1px solid #999; padding: 3px 2px 2px 0; font: bold 9px/10px "Liberation Serif", serif; }
.big { border-bottom: 1px solid #999; padding: 3px 0 4px; width: 24px; }
.big:last-child { border: 0; }
.big button { width: 24px; height: 20px; display: grid; place-items: center; padding-left: 2px; }

.scripts { width: 212px; flex: none; border-left: 3px solid #6e6e6e; border-right: 3px solid #6e6e6e; background: #f0f0f0; display: flex; flex-direction: column; }
.ptabs { height: 18px; flex: none; display: flex; align-items: center; justify-content: space-between; background: linear-gradient(#a4a4a4, #929292); border-bottom: 1px solid #6e6e6e; padding-right: 3px; }
.ptab { background: #e2e2e2; height: 18px; display: flex; align-items: center; gap: 2px; font: bold 10px/18px "Open Sans", sans-serif; padding: 0 7px 0 3px; border-right: 1px solid #6e6e6e; }
.sbody { flex: 1; display: flex; justify-content: flex-end; padding: 20px 14px 4px; }
.sbody i { width: 1px; background: #fff; }

.doc { flex: 1; min-width: 0; position: relative; display: flex; flex-direction: column; background: #b9b9b9; }
.dtabs { height: 19px; flex: none; background: linear-gradient(#aaa, #999); border-bottom: 1px solid #777; display: flex; }
.dtab { display: flex; height: 19px; align-items: center; background: #e2e2e2; font: 600 11px/18px "Open Sans", sans-serif; padding: 0 5px 0 10px; gap: 8px; border-right: 1px solid #888; white-space: nowrap; }
.hrow, .drow { display: flex; background: #999; }
.hrow { height: 17px; flex: none; border-bottom: 1px solid #7c7c7c; }
.cnr { width: 17px; border-right: 1px solid #7c7c7c; background: linear-gradient(#777, #777) 5px 0 / 1px 100% no-repeat, linear-gradient(#777, #777) 0 5px / 100% 1px no-repeat; flex: none; }
.hruler { flex: 1; height: 16px; min-width: 0; overflow: hidden; }
.hruler text, .vruler text { font-size: 9px; fill: #747474; }
.drow { flex: 1; min-height: 0; }
.vruler { width: 17px; height: 100%; border-right: 1px solid #7c7c7c; overflow: hidden; }
.canvas { flex: 1; min-width: 0; height: 100%; background: #b9b9b9; overflow: hidden; }
.folio { font: 11px "Liberation Serif", serif; }
.vscroll { width: 15px; background: #efefef; flex: none; }

.pages { position: absolute; right: 0; top: 9px; width: 207px; border: 1px solid #6e6e6e; border-top: 4px solid #6e6e6e; border-right: 0; background: #f0f0f0; font-size: 9px; color: #000; box-shadow: -1px 1px 2px #0003; }
.hact { display: flex; align-items: center; gap: 5px; }
.hact i { width: 1px; height: 11px; background: #666; }
.masters { display: flex; height: 160px; border-bottom: 1px solid #6e6e6e; }
.mlist { flex: 1; padding: 4px 9px 0 4px; }
.mlist div { display: flex; align-items: center; height: 24px; margin-bottom: 5px; }
.mlist span { flex: 1; padding-top: 4px; }
.mp { width: 16px; height: 24px; border: 1px solid #000; background: #fff; }
.mp.join { border-left: 0; width: 15px; }
.dot { background: linear-gradient(#333, #333) 8px 20px / 1px 1px no-repeat #fff; }
.sc { width: 14px; border-left: 1px solid #fff; display: flex; flex-direction: column; justify-content: space-between; align-items: center; padding: 6px 0; color: #555; }
.sc.dim { color: #bbb; }
.sc .up { transform: rotate(180deg); }
.plist { display: flex; margin-top: 3px; border-top: 1px solid #888; height: 308px; overflow: hidden; }
.spreads { flex: 1; padding: 1px 0 0 74px; }
.spread { height: 64px; width: 47px; text-align: center; display: flex; flex-direction: column; align-items: center; }
.sp { width: 47px; height: 46px; padding: 5px 0; display: flex; position: relative; background: linear-gradient(#000, #000) 23px 0 / 1px 100% no-repeat; }
.pg { width: 24px; height: 36px; line-height: 10px; text-align: left; padding-left: 1px; }
.pg.r { width: 23px; text-align: right; padding-right: 2px; }
.pg.has { border: 1px solid #000; background: linear-gradient(#333, #333) 12px 30px / 1px 2px no-repeat #fff; }
.pg.r.has { border-left: 0; }
.current .pg.has { background-color: #82bceb; font-weight: bold; padding-right: 0; }
.current .pg.has span { display: inline-block; background: #fff; padding: 0 1px; }
.current .sp::after { content: ""; position: absolute; left: 28px; top: 0; border: 5px solid transparent; border-top-color: #000; border-bottom: 0; }
.slabel { line-height: 12px; margin-top: 1px; }
.current .slabel { background: #000; color: #fff; font-weight: bold; font-size: 10px; padding: 0 3px; margin: 0 0 0 20px; }
.thumb i { width: 13px; background: #cdcdcd; flex: 1; margin: 6px 0 25px; }
footer { border-top: 1px solid #aaa; border-bottom: 1px solid #6e6e6e; height: 17px; display: flex; align-items: center; padding-left: 3px; }
footer span { width: 103px; margin-right: 3px; }
footer svg:nth-of-type(2) { margin: 0 17px 0 11px; }
footer svg:nth-of-type(3) { margin-right: 13px; }
footer i { width: 10px; height: 10px; background: repeating-conic-gradient(#888 0 25%, transparent 0 50%) 0 0 / 3px 3px; clip-path: polygon(100% 0, 100% 100%, 0 100%); }
.pgrip { height: 7px; display: grid; place-items: center; }

.dock { width: 153px; flex: none; border-left: 3px solid #6e6e6e; background: #dcdcdc; font-weight: 600; font-size: 10px; }
.dgroup { background: #f0f0f0; border-bottom: 1px solid #6e6e6e; padding-bottom: 5px; display: flex; flex-direction: column; row-gap: 4px; }
.dgrip { height: 11px; background: #dcdcdc; display: grid; place-items: center; border-top: 1px solid #f0f0f0; margin-bottom: -4px; }
.dgroup button { height: 24px; margin: 0 4px; display: flex; align-items: center; gap: 5px; padding-left: 5px; text-align: left; }
.dgroup .sel { background: #a9a9a9; border: 1px solid #777; border-radius: 2px; padding-left: 4px; }
.aa { font: italic 18px "Liberation Serif", serif; width: 22px; color: #333; }

.dialog { position: absolute; left: 177px; top: 231px; width: 822px; height: 585px; border: 1px solid #6e6e6e; background: #f0f0f0; box-shadow: 0 5px 18px 2px #0007; font-size: 12px; color: #000; display: flex; flex-direction: column; }
h1 { margin: 0; font: 11px/24px "Open Sans", sans-serif; background: #fff; padding: 0 0 1px 3px; }
.dbody { display: flex; flex: 1; padding: 15px; gap: 15px; }
ul { list-style: none; margin: 0; padding: 1px 0; width: 152px; height: 432px; border: 1px solid #fff; border-left-color: #a0a0a0; border-top-color: #a0a0a0; font-size: 9px; }
li { height: 20px; line-height: 20px; padding-left: 3px; }
.cur { background: #0078d7; color: #fff; font-weight: bold; }
.pane { flex: 1; display: flex; flex-direction: column; }
h2 { margin: 0; font: 12px/20px "Open Sans", sans-serif; border-bottom: 1px solid #a0a0a0; height: 21px; }
.preview { margin-top: 15px; height: 330px; background: #999; display: flex; justify-content: center; align-items: center; }
.sheet { width: 427px; height: 321px; background: #fff; border: 1px solid #000064; display: flex; }
.sheet div { flex: 1; display: flex; flex-direction: column; align-items: center; justify-content: center; font: 49px/56px "Liberation Serif", serif; color: #bebef5; position: relative; }
.sheet div + div { border-left: 1px solid #3c3ca0; }
.sheet i { position: absolute; bottom: 33px; left: 107px; width: 3px; height: 3px; background: #aaa; }
.nav { display: flex; justify-content: space-between; align-items: center; height: 20px; padding-left: 37px; }
.hs { width: 269px; display: flex; border-top: 1px solid #fff; height: 20px; align-items: center; padding: 0 4px 0 3px; }
.hs i { width: 17px; height: 19px; background: #cdcdcd; margin-left: 5px; margin-right: auto; }
.boxes { display: flex; gap: 15px; align-items: flex-start; margin-top: 10px; }
fieldset { margin: 0; border: 1px solid #dcdcdc; padding: 0; min-width: 0; }
legend { margin-left: 8px; padding: 0 1px; line-height: 16px; }
.msg { width: 244px; height: 76px; }
.msg .sc { margin: -6px 0 0 auto; width: 17px; height: 66px; }
.warn { flex: 1; height: 91px; }
.btns { display: flex; justify-content: flex-end; gap: 12px; margin-top: 22px; padding-right: 1px; }
.btns button { width: 88px; height: 19px; line-height: 15px; background: #e1e1e1; border: 1px solid #adadad; }
.btns .w { width: 134px; }
.btns .prim { border: 2px solid #0078d7; line-height: 13px; }
</style>
